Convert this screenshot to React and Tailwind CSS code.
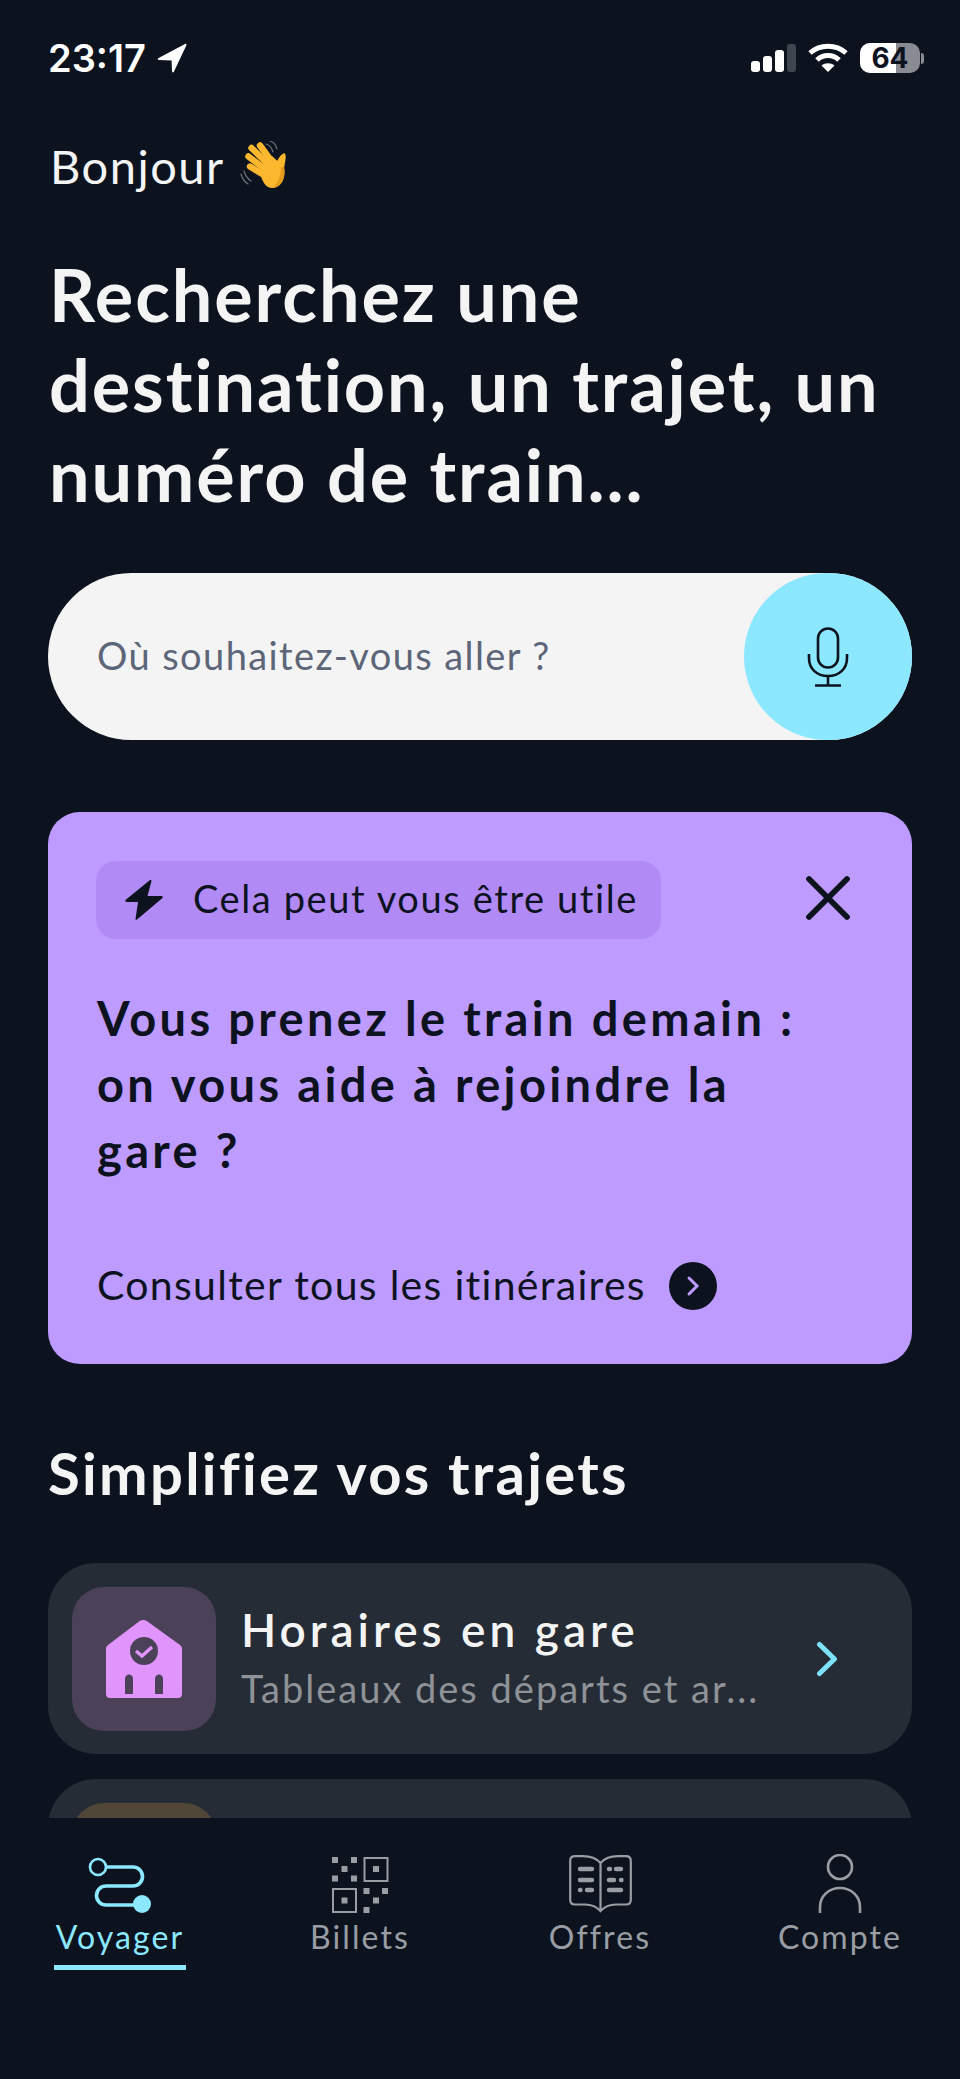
import { X } from "lucide-react";

function Hand() {
  return (
    <svg width="52" height="50" viewBox="0 0 52 50" className="ml-[15px]">
      <g stroke="#6b7078" strokeWidth="1.2" fill="none" strokeLinecap="round">
        <path d="M26 3 C29 4 32 7 33 11" />
        <path d="M30 0 C33 1 36 4 37 8" />
        <path d="M4 30 C5 34 8 38 11 40" />
        <path d="M1 33 C2 37 5 41 8 43" />
      </g>
      <g stroke="#fbb82e" strokeWidth="6.4" strokeLinecap="round" fill="none">
        <path d="M20 4.5 L32 21" />
        <path d="M11.5 7 L28 23" />
        <path d="M8.5 15.5 L25 28" />
        <path d="M10 25.5 L24 34" />
      </g>
      <path d="M44.5 12 C47 15 45 20 44 28 L34 26 C37 21 39 14 44.5 12 Z" fill="#fbb82e" />
      <path d="M20 26 L32 15 L44 26 C46 36 42 46 33 47 C26 47.5 20 40 20 26 Z" fill="#fbb82e" />
      <path d="M44 26 C46 36 42 46 33 47 C38 42 41 35 41 26 Z" fill="#e59a1c" />
    </svg>
  );
}

function StatusBar() {
  return (
    <div className="flex h-[118px] items-start justify-between pl-[48px] pr-[36px] pt-[40px] font-['Inter',sans-serif] text-white">
      <div className="flex items-center">
        <span className="text-[38px] leading-[36px] font-semibold">23:17</span>
        <svg width="30" height="30" viewBox="0 0 30 30" className="ml-[11px]">
          <path d="M28 1 C29 0.5 29.8 1.2 29.3 2.4 L17 28.6 C16.3 30 15 29.6 15 28 L14.6 17.6 L2 17 C0.5 16.9 0.2 15.6 1.6 14.9 Z" fill="#fff" />
        </svg>
      </div>
      <div className="flex items-center gap-[12px] pt-[3px]">
        <svg width="45" height="28" viewBox="0 0 45 28">
          <rect x="0" y="17" width="9" height="11" rx="3" fill="#fff" />
          <rect x="12" y="12" width="9" height="16" rx="3" fill="#fff" />
          <rect x="24" y="6" width="9" height="22" rx="3" fill="#fff" />
          <rect x="36" y="0" width="9" height="28" rx="3" fill="#3f4650" />
        </svg>
        <svg width="40" height="30" viewBox="0 0 40 30" fill="none" stroke="#fff" strokeWidth="5">
          <path d="M2 10 C12 1 28 1 38 10" />
          <path d="M9 17 C15 11 25 11 31 17" />
          <path d="M20 29 L13.5 22.5 C17 19.5 23 19.5 26.5 22.5 Z" fill="#fff" stroke="none" />
        </svg>
        <div className="flex items-center">
          <div className="relative flex h-[30px] w-[60px] items-center justify-center rounded-[10px] bg-[#8a8b92]">
            <div className="absolute inset-y-0 left-0 w-[36px] rounded-l-[10px] bg-white" />
            <span className="relative text-[28px] leading-[30px] font-bold text-[#0c131f]">64</span>
          </div>
          <div className="ml-[1px] h-[11px] w-[3px] rounded-r-full bg-[#8a8b92]" />
        </div>
      </div>
    </div>
  );
}

function Mic() {
  return (
    <svg width="42" height="60" viewBox="0 0 42 60" fill="none" stroke="#0c131f" strokeWidth="2.6">
      <rect x="11" y="1.5" width="20" height="39" rx="10" />
      <path d="M2 27 V31 C2 42 10 49 21 49 C32 49 40 42 40 31 V27" />
      <path d="M21 49 V58 M8 58.5 H34" />
    </svg>
  );
}

function Bolt() {
  return (
    <svg width="38" height="40" viewBox="0 0 38 40">
      <path
        d="M25 0 L0.5 20 C0 21 0.5 22 1.5 22 H13 L10.5 39 C10.5 40 11.5 40 12 39.5 L37.5 18 C38 17 37.5 16 36.5 16 H22.5 L26.5 1 C26.5 0 25.5 -0.3 25 0 Z"
        fill="#0c131f"
      />
    </svg>
  );
}

function StationIcon() {
  return (
    <svg width="76" height="78" viewBox="0 0 76 78">
      <path
        d="M33 1.5 C35.5 -0.5 39 -0.5 41.5 1.5 L74 25 C75.3 26 76 27.3 76 29 V74 C76 76.5 74.5 78 72 78 H4 C1.5 78 0 76.5 0 74 V29 C0 27.3 0.7 26 2 25 Z"
        fill="#e294fd"
      />
      <circle cx="38" cy="31" r="14" fill="#4b4159" />
      <path d="M30 31 L36 36 L46 27" fill="none" stroke="#e294fd" strokeWidth="3.4" />
      <path d="M19 74 V59 C19 53 27 53 27 59 V74 Z" fill="#4b4159" />
      <path d="M49 74 V59 C49 53 57 53 57 59 V74 Z" fill="#4b4159" />
    </svg>
  );
}

function RouteIcon() {
  return (
    <svg width="72" height="60" viewBox="0 0 72 60" fill="none" stroke="#8ce8ff">
      <circle cx="14" cy="13" r="8" strokeWidth="2.6" />
      <path d="M22 13 H49 A9.5 9.5 0 0 1 49 32 H22 A9.5 9.5 0 0 0 22 51 H50" strokeWidth="3.6" />
      <circle cx="58" cy="50" r="9" fill="#8ce8ff" stroke="none" />
    </svg>
  );
}

function QrIcon() {
  const dots = [
    [0, 1], [19, 1], [9.5, 10], [0, 19.5], [19, 19.5],
    [31.5, 32], [50, 32], [41, 41.5], [31.5, 51],
  ];
  return (
    <svg width="57" height="57" viewBox="0 0 57 57" fill="#9a9da3">
      {dots.map(([x, y]) => (
        <rect key={`${x}-${y}`} x={x} y={y} width="6" height="6" />
      ))}
      <rect x="32.5" y="2" width="23" height="23" fill="none" stroke="#9a9da3" strokeWidth="2" />
      <rect x="41" y="10" width="6" height="6" />
      <rect x="1" y="33" width="23" height="23" fill="none" stroke="#9a9da3" strokeWidth="2" />
      <rect x="9.5" y="41.5" width="6" height="6" />
    </svg>
  );
}

function BookIcon() {
  return (
    <svg width="63" height="58" viewBox="0 0 63 58" fill="none" stroke="#9a9da3" strokeWidth="2.2" strokeLinecap="round">
      <path d="M31.5 54 L31.5 8 C27 3 21 1.2 14 1.2 H6 C3 1.2 1.2 3 1.2 6 V45 C1.2 48 3 49.5 6 49.5 H16 C22 49.5 27 51 31.5 56 C36 51 41 49.5 47 49.5 H57 C60 49.5 61.8 48 61.8 45 V6 C61.8 3 60 1.2 57 1.2 H49 C42 1.2 36 3 31.5 8" />
      <g strokeWidth="4.4">
        <path d="M11 14 H23" />
        <path d="M11 25 H23" />
        <path d="M11 35 H11.5 M18 35 H23" />
        <path d="M40 14 H41 M47 14 H52" />
        <path d="M40 25 H45 M52 25 H52.5" />
        <path d="M40 35 H52" />
      </g>
    </svg>
  );
}

function UserIcon() {
  return (
    <svg width="44" height="60" viewBox="0 0 44 60" fill="none" stroke="#9a9da3" strokeWidth="2.6">
      <circle cx="22" cy="13" r="12" />
      <path d="M2 59 V53 C2 42 11 34 22 34 C33 34 42 42 42 53 V59" />
    </svg>
  );
}

const tabs = [
  { label: "Billets", icon: <QrIcon /> },
  { label: "Offres", icon: <BookIcon /> },
  { label: "Compte", icon: <UserIcon /> },
];

function TabItem({ label, icon, active }) {
  return (
    <div className={`flex flex-col items-center ${active ? "text-[#8ce8ff]" : "text-[#9a9da3]"}`}>
      <div className="flex h-[60px] items-center justify-center">{icon}</div>
      <div className="mt-[3px] text-[32px] leading-[40px] tracking-[2.1px]">{label}</div>
      {active && <div className="mt-[8px] h-[5px] w-[132px] bg-[#8ce8ff]" />}
    </div>
  );
}

export default function App() {
  return (
    <div className="flex h-[2079px] w-[960px] flex-col overflow-hidden bg-[#0c131f] font-['Lato',sans-serif] text-[#f4f4f4]">
      <StatusBar />

      <div className="min-h-0 flex-1 overflow-hidden px-[48px] pt-[22px]">
        <div className="flex h-[50px] items-center pl-[2px] pt-[2px]">
          <span className="text-[47px] leading-[50px] tracking-[1.5px]">Bonjour</span>
          <Hand />
        </div>

        <h1 className="mt-[59px] pl-[1px] text-[72px] leading-[90px] font-bold tracking-[1.9px]">
          Recherchez une
          <br />
          destination, un trajet, un
          <br />
          numéro de train...
        </h1>

        <div className="mt-[54px] flex h-[167px] items-center justify-between rounded-full bg-[#f4f4f4] pl-[49px]">
          <span className="mt-[-2px] text-[38px] tracking-[1.4px] text-[#5c6678]">Où souhaitez-vous aller ?</span>
          <div className="flex h-[167px] w-[168px] items-center justify-center rounded-full bg-[#8ce8ff]">
            <Mic />
          </div>
        </div>

        <div className="mt-[72px] h-[552px] rounded-[32px] bg-[#be9bff] pl-[48px] pr-[40px] pt-[49px] text-[#0c131f]">
          <div className="flex items-center justify-between">
            <div className="flex h-[78px] items-center gap-[30px] rounded-[20px] bg-[#b28af5] pl-[29px] pr-[23px]">
              <Bolt />
              <span className="mt-[-3px] text-[38px] tracking-[1.6px]">Cela peut vous être utile</span>
            </div>
            <X size={76} strokeWidth={1.8} className="mr-[6px] mt-[-6px] mb-[-2px] text-[#0c131f]" />
          </div>
          <div className="mt-[46px] pl-[1px] text-[47px] leading-[66px] font-bold tracking-[3.35px]">
            Vous prenez le train demain :
            <br />
            on vous aide à rejoindre la
            <br />
            gare ?
          </div>
          <div className="mt-[77px] flex items-center gap-[23px] pl-[1px]">
            <span className="mt-[-2px] text-[41px] leading-[54px] tracking-[1.3px]">Consulter tous les itinéraires</span>
            <div className="flex size-[48px] items-center justify-center rounded-full bg-[#0c131f]">
              <svg width="14" height="22" viewBox="0 0 14 22" fill="none" stroke="#be9bff" strokeWidth="3" strokeLinecap="round">
                <path d="M3 3 L11 11 L3 19" />
              </svg>
            </div>
          </div>
        </div>

        <h2 className="mt-[78px] text-[58px] leading-[62px] font-bold tracking-[2.3px]">Simplifiez vos trajets</h2>

        <div className="mt-[59px] flex h-[191px] items-center rounded-[48px] bg-[#252c36] pl-[24px] pr-[74px]">
          <div className="flex size-[144px] shrink-0 items-center justify-center rounded-[32px] bg-[#4b4159]">
            <StationIcon />
          </div>
          <div className="ml-[25px] min-w-0 flex-1">
            <div className="mt-[-2px] text-[46px] leading-[56px] font-semibold tracking-[4px]">Horaires en gare</div>
            <div className="mt-[5px] truncate text-[38px] leading-[50px] tracking-[2px] text-[#8f9296]">Tableaux des départs et ar...</div>
          </div>
          <svg width="22" height="36" viewBox="0 0 22 36" fill="none" stroke="#7de2fb" strokeWidth="5" strokeLinecap="round" strokeLinejoin="round">
            <path d="M3.5 3.5 L18.5 18 L3.5 32.5" />
          </svg>
        </div>

        <div className="mt-[25px] h-[191px] rounded-[48px] bg-[#252c36] pl-[24px] pt-[24px]">
          <div className="size-[144px] rounded-[32px] bg-[#504739]" />
        </div>
      </div>

      <div className="grid h-[261px] shrink-0 grid-cols-4 bg-[#0c131f] pt-[36px]">
        <TabItem label="Voyager" icon={<RouteIcon />} active />
        {tabs.map((t) => (
          <TabItem key={t.label} label={t.label} icon={t.icon} />
        ))}
      </div>
    </div>
  );
}
